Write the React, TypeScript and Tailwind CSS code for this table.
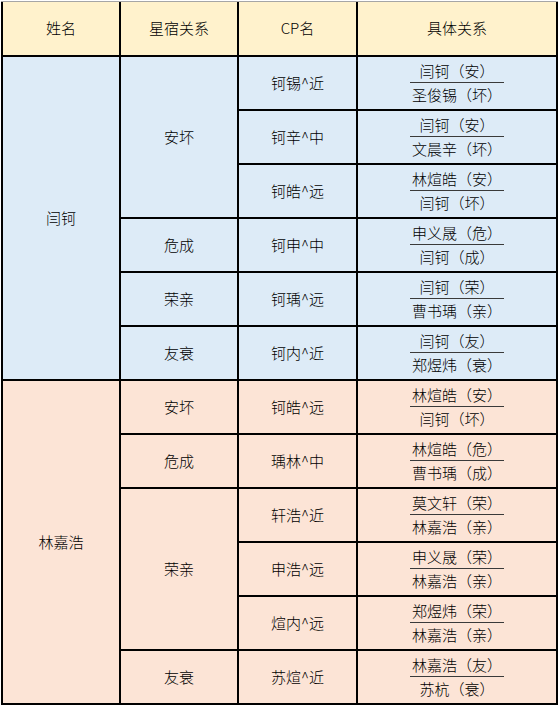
type Pair = { cp: string; top: string; bottom: string };
type Sub = { name: string; span: string; pairs: Pair[] };
type Group = { name: string; span: string; bg: string; subs: Sub[] };

const groups: Group[] = [
  {
    name: "闫钶",
    span: "row-span-6",
    bg: "bg-[#ddebf7]",
    subs: [
      {
        name: "安坏",
        span: "row-span-3",
        pairs: [
          { cp: "钶锡^近", top: "闫钶（安）", bottom: "圣俊锡（坏）" },
          { cp: "钶辛^中", top: "闫钶（安）", bottom: "文晨辛（坏）" },
          { cp: "钶皓^远", top: "林煊皓（安）", bottom: "闫钶（坏）" },
        ],
      },
      { name: "危成", span: "row-span-1", pairs: [{ cp: "钶申^中", top: "申义晟（危）", bottom: "闫钶（成）" }] },
      { name: "荣亲", span: "row-span-1", pairs: [{ cp: "钶瑀^远", top: "闫钶（荣）", bottom: "曹书瑀（亲）" }] },
      { name: "友衰", span: "row-span-1", pairs: [{ cp: "钶内^近", top: "闫钶（友）", bottom: "郑煜炜（衰）" }] },
    ],
  },
  {
    name: "林嘉浩",
    span: "row-span-6",
    bg: "bg-[#fce4d6]",
    subs: [
      { name: "安坏", span: "row-span-1", pairs: [{ cp: "钶皓^远", top: "林煊皓（安）", bottom: "闫钶（坏）" }] },
      { name: "危成", span: "row-span-1", pairs: [{ cp: "瑀林^中", top: "林煊皓（危）", bottom: "曹书瑀（成）" }] },
      {
        name: "荣亲",
        span: "row-span-3",
        pairs: [
          { cp: "轩浩^近", top: "莫文轩（荣）", bottom: "林嘉浩（亲）" },
          { cp: "申浩^远", top: "申义晟（荣）", bottom: "林嘉浩（亲）" },
          { cp: "煊内^远", top: "郑煜炜（荣）", bottom: "林嘉浩（亲）" },
        ],
      },
      { name: "友衰", span: "row-span-1", pairs: [{ cp: "苏煊^近", top: "林嘉浩（友）", bottom: "苏杭（衰）" }] },
    ],
  },
];

function Cell({ className = "", children }: { className?: string; children: React.ReactNode }) {
  return <div className={`flex items-center justify-center ${className}`}>{children}</div>;
}

function Fraction({ top, bottom }: { top: string; bottom: string }) {
  return (
    <div className="inline-grid justify-items-center">
      <span className="leading-[18px] px-[2px]">{top}</span>
      <div className="h-px w-full bg-[#3a3a3a] mt-[2px] mb-[3px]" />
      <span className="leading-[18px] px-[2px]">{bottom}</span>
    </div>
  );
}

export default function App() {
  return (
    <div className="w-[560px] h-[707px] bg-white pl-[1px] pt-[1px] text-[15px] font-light text-black" style={{ fontFamily: '"Noto Sans CJK SC", sans-serif' }}>
      <div className="grid grid-cols-[116px_116px_117px_198px] grid-rows-[53px_repeat(12,52px)] gap-[2px] bg-black px-[2px] pb-[2px] border-t border-[#a6a6a6] w-[557px]">
        {["姓名", "星宿关系", "CP名", "具体关系"].map((h) => (
          <Cell key={h} className="bg-[#fff2cc]">{h}</Cell>
        ))}
        {groups.map((g) => (
          <GroupRows key={g.name} g={g} />
        ))}
      </div>
    </div>
  );
}

function GroupRows({ g }: { g: Group }) {
  return (
    <>
      <Cell className={`${g.span} ${g.bg}`}>{g.name}</Cell>
      {g.subs.map((s, i) => (
        <SubRows key={i} s={s} bg={g.bg} />
      ))}
    </>
  );
}

function SubRows({ s, bg }: { s: Sub; bg: string }) {
  return (
    <>
      <Cell className={`${s.span} ${bg}`}>{s.name}</Cell>
      {s.pairs.map((p, i) => (
        <PairRow key={i} p={p} bg={bg} />
      ))}
    </>
  );
}

function PairRow({ p, bg }: { p: Pair; bg: string }) {
  return (
    <>
      <Cell className={bg}>{p.cp}</Cell>
      <Cell className={bg}>
        <Fraction top={p.top} bottom={p.bottom} />
      </Cell>
    </>
  );
}
